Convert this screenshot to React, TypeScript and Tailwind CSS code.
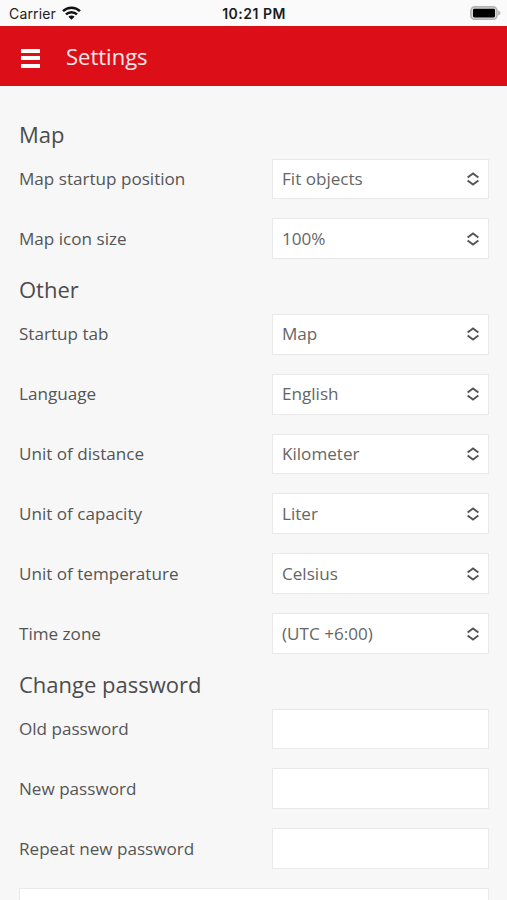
type Field = { label: string; value?: string };

const SECTIONS: { title: string; fields: Field[] }[] = [
  {
    title: "Map",
    fields: [
      { label: "Map startup position", value: "Fit objects" },
      { label: "Map icon size", value: "100%" },
    ],
  },
  {
    title: "Other",
    fields: [
      { label: "Startup tab", value: "Map" },
      { label: "Language", value: "English" },
      { label: "Unit of distance", value: "Kilometer" },
      { label: "Unit of capacity", value: "Liter" },
      { label: "Unit of temperature", value: "Celsius" },
      { label: "Time zone", value: "(UTC +6:00)" },
    ],
  },
  {
    title: "Change password",
    fields: [
      { label: "Old password" },
      { label: "New password" },
      { label: "Repeat new password" },
    ],
  },
];

function WifiIcon() {
  return (
    <svg width="19" height="14" viewBox="0 0 19 14" fill="none" stroke="#111" strokeWidth="2.5">
      <path d="M1 5.1a12.2 12.2 0 0 1 17 0" />
      <path d="M4 8.4a7.9 7.9 0 0 1 11 0" />
      <path d="M9.5 13.8 6.4 10.8a4.4 4.4 0 0 1 6.2 0Z" fill="#111" stroke="none" />
    </svg>
  );
}

function BatteryIcon() {
  return (
    <svg width="31" height="14" viewBox="0 0 31 14">
      <rect x="0.9" y="0.9" width="26" height="12.4" rx="3.6" fill="#d8d8d8" stroke="#b4b4b4" strokeWidth="1.6" />
      <rect x="3" y="2.7" width="22" height="8.8" rx="1.4" fill="#000" />
      <path d="M28.2 4.5c2.9.9 2.9 4.1 0 5Z" fill="#b4b4b4" />
    </svg>
  );
}

function StatusBar() {
  return (
    <div className="grid h-[25.5px] shrink-0 grid-cols-3 items-center bg-[#fafafa] pr-[6px] pl-[9px] font-['Inter',sans-serif] text-[14px] text-[#1c1c1c]">
      <div className="flex items-center gap-[6px]">
        <span className="pt-px tracking-[0.15px]">Carrier</span>
        <WifiIcon />
      </div>
      <span className="pt-[2px] pr-[2px] text-center text-[14px] font-semibold tracking-[0.5px]">10:21 PM</span>
      <div className="flex justify-end">
        <BatteryIcon />
      </div>
    </div>
  );
}

function Header() {
  return (
    <header className="flex h-[60.5px] shrink-0 items-center bg-[#dc0f18] pl-[21px] text-white">
      <button className="mt-[5px] flex w-[19px] flex-col gap-[3.5px]" aria-label="Menu">
        <span className="h-[4px] w-full bg-white" />
        <span className="h-[4px] w-full bg-white" />
        <span className="h-[4px] w-full bg-white" />
      </button>
      <h1 className="ml-[26px] pt-px text-[22px] text-white/90">Settings</h1>
    </header>
  );
}

function SelectArrows() {
  return (
    <svg width="12" height="14" viewBox="0 0 12 14" fill="none" stroke="#555" strokeWidth="1.9">
      <path d="M0.6 5.6 6 1.5l5.4 4.1" />
      <path d="M0.6 8.4 6 12.5l5.4-4.1" />
    </svg>
  );
}

function SettingRow({ label, value }: Field) {
  return (
    <div className="flex h-[40.85px] items-center justify-between">
      <span>{label}</span>
      <div className="flex h-full w-[217px] items-center justify-between border border-[#e9e9e9] bg-white pr-[9px] pl-[9px] text-[#666]">
        {value && (
          <>
            <span>{value}</span>
            <SelectArrows />
          </>
        )}
      </div>
    </div>
  );
}

export default function App() {
  return (
    <div className="flex h-[900px] w-[507px] flex-col overflow-hidden bg-[#f7f7f7] font-['Open_Sans',sans-serif] text-[17.1px] text-[#555]">
      <StatusBar />
      <Header />
      <main className="shrink-0 pr-[18px] pl-[19px] pt-[18px]">
        {SECTIONS.map((section) => (
          <section key={section.title}>
            <h2 className="h-[54.6px] pt-[14.8px] text-[22px] leading-[30px] text-[#4c4c4c]">{section.title}</h2>
            <div className="flex flex-col gap-[19px]">
              {section.fields.map((f) => (
                <SettingRow key={f.label} {...f} />
              ))}
            </div>
          </section>
        ))}
        <div className="mt-[19px] h-[41px] border border-[#e9e9e9] bg-white" />
      </main>
    </div>
  );
}
